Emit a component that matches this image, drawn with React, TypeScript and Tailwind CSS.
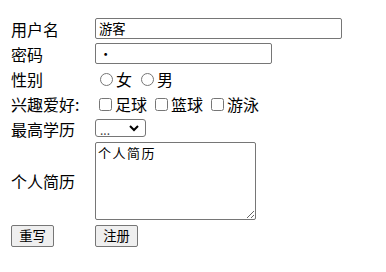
import React from "react";

const font = { fontFamily: '"Noto Sans CJK SC", "Noto Sans", sans-serif' };

export default function App() {
  return (
    <div
      className="w-[386px] h-[272px] bg-white text-black text-[16px] leading-none pt-[17px] pl-[11px]"
      style={font}
    >
      <div className="flex items-center h-[23px]">
        <span className="w-[84px]">用户名</span>
        <input
          type="text"
          defaultValue="游客"
          className="w-[247px] h-[21px] border border-[#767676] rounded-[2px] px-[3px] text-[13.33px]"
        />
      </div>
      <div className="flex items-center h-[23px] mt-[2px]">
        <span className="w-[84px]">密码</span>
        <input
          type="password"
          defaultValue="1"
          className="w-[177px] h-[21px] border border-[#767676] rounded-[2px] px-[3px] text-[13.33px]"
        />
      </div>
      <div className="flex items-center h-[23px] mt-[2px]">
        <span className="w-[84px]">性别</span>
        <label className="flex items-center">
          <input type="radio" name="sex" className="w-[13px] h-[13px] ml-[5px] mr-[3px] mt-[2px]" />
          <span>女</span>
        </label>
        <label className="flex items-center ml-[4px]">
          <input type="radio" name="sex" className="w-[13px] h-[13px] ml-[5px] mr-[3px] mt-[2px]" />
          <span>男</span>
        </label>
      </div>
      <div className="flex items-center h-[24px] mt-[2px]">
        <span className="w-[84px]">兴趣爱好:</span>
        <label className="flex items-center">
          <input type="checkbox" className="w-[13px] h-[13px] ml-[4px] mr-[3px] mt-[1px]" />
          <span>足球</span>
        </label>
        <label className="flex items-center ml-[4px]">
          <input type="checkbox" className="w-[13px] h-[13px] ml-[4px] mr-[3px] mt-[1px]" />
          <span>篮球</span>
        </label>
        <label className="flex items-center ml-[4px]">
          <input type="checkbox" className="w-[13px] h-[13px] ml-[4px] mr-[3px] mt-[1px]" />
          <span>游泳</span>
        </label>
      </div>
      <div className="flex items-center h-[22px] mt-[1px]">
        <span className="w-[84px] mt-[2px]">最高学历</span>
        <div className="relative w-[51px] h-[18px] border border-[#767676] rounded-[3px] text-[12px] text-[#444]">
          <span className="absolute left-[4px] top-[4px] leading-none">...</span>
          <svg
            className="absolute right-[6px] top-[4px]"
            width="10"
            height="8"
            viewBox="0 0 10 8"
          >
            <path d="M1 2 L5 6 L9 2" stroke="#000" strokeWidth="2" fill="none" />
          </svg>
        </div>
      </div>
      <div className="flex items-center h-[80px] mt-[2px]">
        <span className="w-[84px]">个人简历</span>
        <textarea
          defaultValue="个人简历"
          className="w-[161px] h-[78px] border border-[#767676] rounded-[2px] px-[2px] py-[2px] text-[13px] tracking-[1.5px] leading-[16px] resize"
        />
      </div>
      <div className="flex items-center h-[24px] mt-[3px]">
        <div className="w-[84px]">
          <button className="w-[43px] h-[22px] bg-[#efefef] border border-[#767676] rounded-[2px] text-[13.33px]">
            重写
          </button>
        </div>
        <button className="w-[43px] h-[22px] bg-[#efefef] border border-[#767676] rounded-[2px] text-[13.33px]">
          注册
        </button>
      </div>
    </div>
  );
}
